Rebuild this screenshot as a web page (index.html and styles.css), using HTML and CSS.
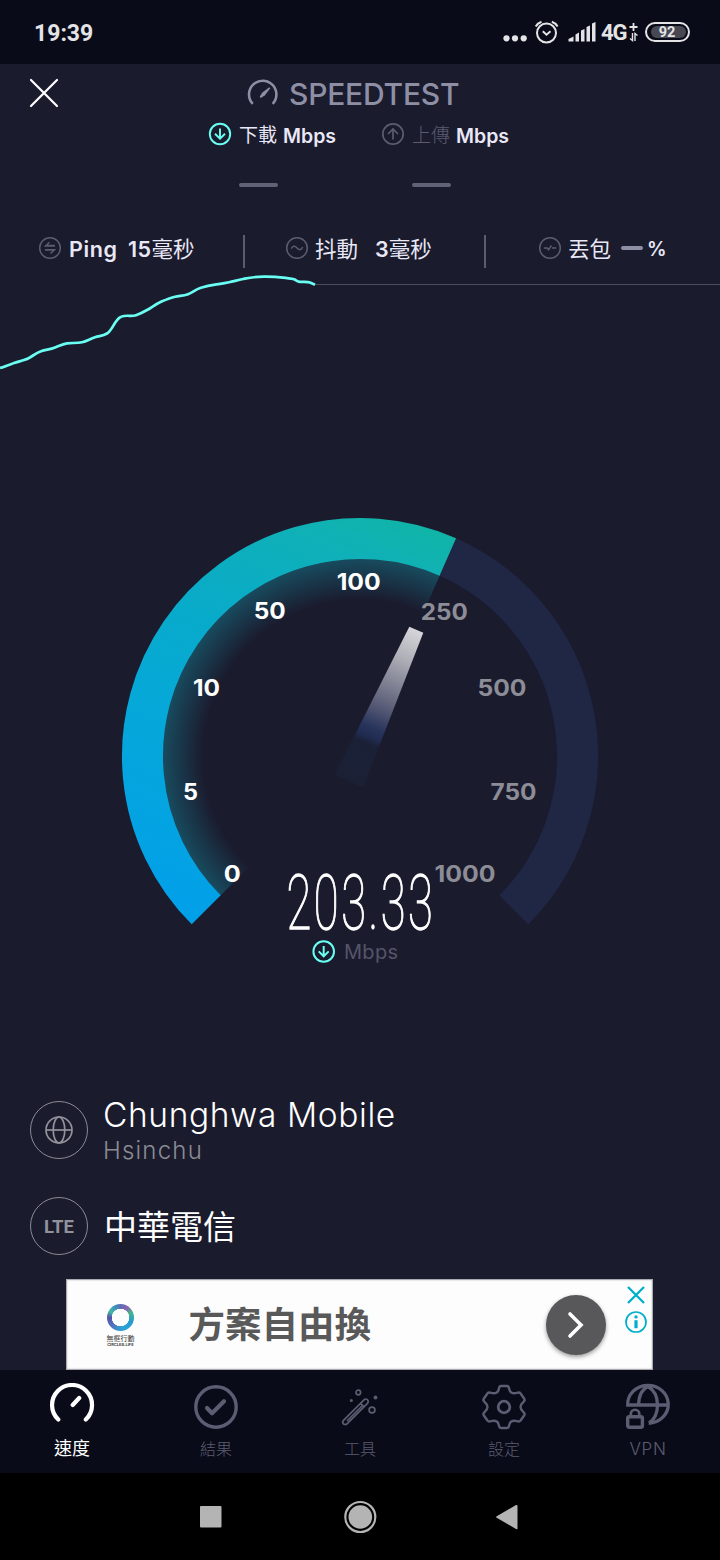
FILE: index.html
```html
<!DOCTYPE html>
<html lang="zh-Hant">
<head>
<meta charset="utf-8">
<title>Speedtest</title>
<link rel="stylesheet" href="styles.css">
</head>
<body>
<div class="phone">
  <header class="status">
    <span class="clock">19:39</span>
    <div class="status-icons">
      <svg width="100" height="28" viewBox="500 18 100 28" fill="none" stroke="#e4e4e6">
        <g fill="#e4e4e6" stroke="none"><circle cx="506.500" cy="38.300" r="3.100"/><circle cx="515" cy="38.300" r="3.100"/><circle cx="523.700" cy="38.300" r="3.100"/>
        <path d="M568.500 41.500V39l5-2.500v5zM575.500 41.500v-7l3.500-2v9zM581 41.500V30.500l3.500-1.500v12.500zM586.500 41.500V27l3.500-1.500v16zM592 41.500V23.500l3.500-1.500v19.500z"/></g>
        <circle cx="546.500" cy="33" r="9.500" stroke-width="2"/>
        <path d="M542.800 31.300l3.700 3.400 4-3.400M535.700 26.500q2-3.500 5.800-4.800M551.800 21.700q4 1.300 5.800 4.800" stroke-width="2"/>
      </svg>
      <span class="net">4G</span>
      <svg class="net-mark" width="10" height="22" viewBox="629 21 10 22" fill="none" stroke="#e4e4e6" stroke-width="1.400"><path d="M629.500 27h8M633.500 23v8" stroke-width="1.800"/><path d="M632.500 33v7.500l-2.500-2M635 41v-7.500l2.500 2"/></svg>
      <span class="battery"><span class="battery-level">92</span></span>
    </div>
  </header>

  <section class="top">
    <div class="title-row">
      <svg class="close" width="30" height="30" viewBox="0 0 30 30"><path d="M2 2l26 26M28 2L2 28" stroke="#fff" stroke-width="2.200" stroke-linecap="round"/></svg>
      <svg class="logo" width="32" height="28" viewBox="246 78 32 28" fill="none" stroke="#8e8fa5"><path d="M252.700 102.800a13.700 13.700 0 1 1 20 0" stroke-width="2.600"/><path d="M259.700 95.800l2.400-4 7.200-5.600 1 1-5.600 7.200-4 2.600z" fill="#8e8fa5" stroke="none"/></svg>
      <span class="brand">SPEEDTEST</span>
    </div>
    <div class="modes">
      <div class="mode">
        <svg width="24" height="24" viewBox="0 0 24 24" fill="none" stroke="#6afff3" stroke-width="1.900"><circle cx="12" cy="12" r="10.200"/><path d="M12 6.500V16.500M7 11.800l5 4.900 5-4.900"/></svg>
        <span class="mode-name">下載</span><span class="mbps">Mbps</span><i class="dash"></i>
      </div>
      <div class="mode mode-up">
        <svg width="24" height="24" viewBox="0 0 24 24" fill="none" stroke="#5c5c70" stroke-width="1.700"><circle cx="12" cy="12" r="10.200"/><path d="M12 17.500V7M7 12l5-5 5 5"/></svg>
        <span class="mode-name dim">上傳</span><span class="mbps">Mbps</span><i class="dash"></i>
      </div>
    </div>
    <div class="stats">
      <div class="stat ping">
        <svg width="24" height="24" viewBox="0 0 24 24" fill="none" stroke="#5c5c70" stroke-width="1.500"><circle cx="12" cy="12" r="10.300"/><path d="M17 10H7.500l4-3.700M7.500 9.600H17M7 13.700h9.500l-4 3.800M16.500 14H7"/></svg>
        <b class="ping-name">Ping</b><span class="value"><b>15</b>毫秒</span>
      </div>
      <div class="stat jitter">
        <svg width="24" height="24" viewBox="0 0 24 24" fill="none" stroke="#5c5c70" stroke-width="1.500"><circle cx="12" cy="12" r="10.300"/><path d="M6.300 12.700c1.600-3 3.600-3 5.700-.7s4 2.300 5.700-.8"/></svg>
        <span class="stat-name">抖動</span><span class="value"><b>3</b>毫秒</span>
      </div>
      <div class="stat loss">
        <svg width="24" height="24" viewBox="0 0 24 24" fill="none" stroke="#5c5c70" stroke-width="1.500"><circle cx="12" cy="12" r="10.300"/><path d="M5.800 12h3.400l1.400 1.800L13.400 9.500M14 12h4.300"/></svg>
        <span class="stat-name">丟包</span><i class="loss-dash"></i><b class="percent">%</b>
      </div>
    </div>
  </section>

  <svg class="history" width="720" height="110" viewBox="0 270 720 110" fill="none">
    <path d="M314 284.500H720" stroke="#4b4b5d"/>
    <path d="M0 368C5 366.500 10 364.500 14 363S24 360.500 28 358.500S36 353 41 351.300S50 349.500 55 347.500S63 344 67 343.300S77 343.500 82 342.300S90 338.800 95 337.300S103 336 107 333.500S113 325.500 116 321.500S120 316.800 124 316S132 316.600 136 315.200S144 311.800 148 309.500S156 304 161 301.800S170 297.800 175 296.700S183 296 188 294.200S195 289.500 201 287.800S210 285.500 215 284.700S224 283.400 229 282.300S238 280 243 279S253 276.700 264 276.600S277 276.800 283 277.700S291 278 294 279.300S297 281.400 300 281.800S308 281.600 310 282.600L315 284.800" stroke="#6afff3" stroke-width="2.700"/>
  </svg>

  <svg class="gauge" width="720" height="480" viewBox="0 500 720 480">
    <defs>
      <linearGradient id="arc" gradientUnits="userSpaceOnUse" x1="220" y1="925" x2="400" y2="515">
        <stop offset="0" stop-color="#02a0e9"/><stop offset=".38" stop-color="#05a8d8"/><stop offset=".65" stop-color="#09abc8"/><stop offset=".9" stop-color="#10b1b5"/><stop offset="1" stop-color="#10b4a7"/>
      </linearGradient>
      <radialGradient id="glow" gradientUnits="userSpaceOnUse" cx="360" cy="756" r="198">
        <stop offset=".79" stop-color="#157488" stop-opacity="0"/><stop offset=".88" stop-color="#157488" stop-opacity=".24"/><stop offset="1" stop-color="#157488" stop-opacity=".55"/>
      </radialGradient>
      <linearGradient id="needle" gradientUnits="userSpaceOnUse" x1="416" y1="630" x2="351" y2="781">
        <stop offset="0" stop-color="#d5d5d9"/><stop offset=".2" stop-color="#acacb5"/><stop offset=".5" stop-color="#5b5e78"/><stop offset=".65" stop-color="#28345b"/><stop offset=".71" stop-color="#202b50"/><stop offset=".75" stop-color="#1a2137"/><stop offset="1" stop-color="#1b2035"/>
      </linearGradient>
    </defs>
    <g fill="none">
      <path d="M447.800 557A217.500 217.500 0 0 1 513.800 909.800" stroke="#1f2744" stroke-width="41"/>
      <path d="M234.100 881.900A178 178 0 0 1 431.900 593.200" stroke="url(#glow)" stroke-width="42"/>
      <path d="M206.200 909.800A217.500 217.500 0 0 1 447.800 557" stroke="url(#arc)" stroke-width="41"/>
    </g>
    <path d="M409.300 626.700L423.300 632.800L363 787.500L335 774.500z" fill="url(#needle)"/>
    <g class="ticks" text-anchor="middle">
      <text x="232.300" y="882" textLength="17" lengthAdjust="spacingAndGlyphs">0</text><text x="190.500" y="799.500" textLength="15" lengthAdjust="spacingAndGlyphs">5</text><text x="206.500" y="695.500" textLength="27" lengthAdjust="spacingAndGlyphs">10</text><text x="269.700" y="619" textLength="32" lengthAdjust="spacingAndGlyphs">50</text><text x="358.700" y="590" textLength="44" lengthAdjust="spacingAndGlyphs">100</text>
      <g class="ahead"><text x="444.300" y="620" textLength="47" lengthAdjust="spacingAndGlyphs">250</text><text x="502" y="695.500" textLength="49" lengthAdjust="spacingAndGlyphs">500</text><text x="513.500" y="799.500" textLength="46" lengthAdjust="spacingAndGlyphs">750</text><text x="465" y="882" textLength="61" lengthAdjust="spacingAndGlyphs">1000</text></g>
    </g>
    <text class="speed" transform="translate(286.500 929) scale(.6 1)" textLength="244">203.33</text>
    <g fill="none" stroke="#6afff3" stroke-width="2"><circle cx="323.700" cy="951.500" r="10.300"/><path d="M323.700 946v10.200M318.700 951.400l5 4.900 5-4.900"/></g>
    <text class="speed-unit" x="344" y="959" textLength="54">Mbps</text>
  </svg>

  <section class="hosts">
    <div class="host">
      <div class="badge"><svg width="30" height="30" viewBox="0 0 30 30" fill="none" stroke="#92929b" stroke-width="1.700"><circle cx="15" cy="15" r="13"/><ellipse cx="15" cy="15" rx="5.800" ry="13"/><path d="M2 15h26"/></svg></div>
      <div class="host-text"><span class="host-name">Chunghwa Mobile</span><span class="host-city">Hsinchu</span></div>
    </div>
    <div class="host">
      <div class="badge lte">LTE</div>
      <span class="carrier">中華電信</span>
    </div>
  </section>

  <aside class="ad">
    <div class="ad-logo">
      <div class="ring"></div>
      <span class="ad-brand">無框行動</span><span class="ad-sub">CIRCLES.LIFE</span>
    </div>
    <span class="ad-title">方案自由換</span>
    <div class="ad-go"><svg width="20" height="30" viewBox="0 0 20 30" fill="none" stroke="#fff" stroke-width="3.600" stroke-linecap="round"><path d="M4 4l11 11L4 26"/></svg></div>
    <div class="ad-tools">
      <svg width="20" height="20" viewBox="0 0 20 20"><path d="M2 2l16 16M18 2L2 18" stroke="#00aecd" stroke-width="2.300"/></svg>
      <svg width="24" height="24" viewBox="0 0 24 24"><circle cx="12" cy="12" r="10" fill="none" stroke="#00aecd" stroke-width="1.700"/><circle cx="12" cy="6.900" r="1.700" fill="#00aecd"/><path d="M12 10.200v8" stroke="#00aecd" stroke-width="3.200"/></svg>
    </div>
  </aside>

  <nav class="tabs">
    <div class="tab active"><svg width="48" height="48" viewBox="0 0 48 48" fill="none" stroke="#fff" stroke-width="4.200" stroke-linecap="round"><path d="M10.300 36.500a20 20 0 1 1 27.500 0M24.700 22l6.500-7"/></svg><span>速度</span></div>
    <div class="tab"><svg width="48" height="48" viewBox="0 0 48 48" fill="none" stroke="#5c5c72"><circle cx="24" cy="24" r="20.200" stroke-width="3.400"/><path d="M15 25l5 5.200 12-12" stroke-width="4.200" stroke-linecap="round" stroke-linejoin="round"/></svg><span>結果</span></div>
    <div class="tab"><svg width="48" height="48" viewBox="0 0 48 48" fill="none" stroke="#5c5c72" stroke-width="1.700"><path d="M7.500 37.300L28 16.800a2.400 2.400 0 0 1 3.500 3.500L11 40.800a2.400 2.400 0 0 1-3.500-3.500zM24.500 20.300l3.500 3.500M11 38L26 23"/><circle cx="22.300" cy="9.500" r="2.300"/><circle cx="36" cy="27" r="2.900"/><g fill="#5c5c72" stroke="none"><circle cx="15.300" cy="17.500" r="1.500"/><circle cx="39.500" cy="14.500" r="1.900"/></g></svg><span>工具</span></div>
    <div class="tab"><svg width="48" height="48" viewBox="0 0 48 48" fill="none" stroke="#5c5c72" stroke-width="2.400" stroke-linejoin="round"><path d="M21 3h6q1.500 0 1.800 1.500 .8 4 2.400 5 2.100 1.300 5.500.4 2.800-1 3.700.4l3.900 5.500q.9 1.500-.6 2.800-3.200 2.900-3.200 5.400t3.200 5.400q1.500 1.300.6 2.800l-3.900 5.500q-.9 1.400-3.700.4-3.400-.9-5.500.4-1.600 1-2.400 5-.3 1.500-1.800 1.500h-6q-1.500 0-1.800-1.500-.8-4-2.400-5-2.100-1.300-5.500-.4-2.800 1-3.700-.4l-3.900-5.500q-.9-1.500.6-2.800 3.200-2.900 3.200-5.400t-3.200-5.400q-1.500-1.300-.6-2.800l3.900-5.500q.9-1.400 3.700-.4 3.400.9 5.500-.4 1.600-1 2.400-5Q19.500 3 21 3z"/><circle cx="24" cy="24" r="5.800" stroke-width="2.800"/></svg><span>設定</span></div>
    <div class="tab"><svg width="48" height="48" viewBox="0 0 48 48" fill="none" stroke="#5c5c72" stroke-width="3.300"><path d="M3.700 22.500a20.300 19 0 1 1 21 17.800M2.200 22h43.200M14.600 22q.3-14.500 9.400-18.500 9.500 5.500 9.500 18.500 0 12.500-8.500 18"/><rect x="3.700" y="33.700" width="14.700" height="10.600" rx="1.500" stroke-width="3.400"/><path d="M6.800 33v-2a4.200 4.200 0 0 1 8.500 0v2" stroke-width="2.700"/></svg><span class="vpn">VPN</span></div>
  </nav>
  <footer class="sysnav">
    <svg width="720" height="87" viewBox="0 1473 720 87" fill="#b4b4b4"><rect x="200" y="1506" width="21.500" height="21.500" rx="1"/><circle cx="360.300" cy="1517" r="11.800"/><circle cx="360.300" cy="1517" r="15" fill="none" stroke="#b4b4b4" stroke-width="2.200"/><path d="M496.700 1516.200L516 1505q1.500-.5 1.500 1v22.500q0 1.200-1.500.5l-19.300-11.200q-1.200-.8 0-1.600z"/></svg>
  </footer>
</div>
</body>
</html>
```
FILE: styles.css
```css
* { box-sizing: border-box; }
body { margin: 0; background: #000; }
svg { display: block; flex: none; }
.phone {
  width: 720px; height: 1560px; display: flex; flex-direction: column;
  background: #1b1b2e; color: #e9e8f6; overflow: hidden;
  font-family: Inter, "Noto Sans CJK TC", sans-serif; white-space: nowrap;
}
.phone > * { flex: none; }

.status {
  height: 64px; padding: 0 30px 0 34px; background: #090b18; color: #e4e4e6;
  display: flex; align-items: center; justify-content: space-between;
}
.clock { font: 700 23px/28px Roboto, sans-serif; padding-top: 3px; }
.status-icons { display: flex; align-items: center; }
.net { font: 700 22px/28px Roboto, sans-serif; width: 28px; margin-left: 1px; letter-spacing: -1px; padding-top: 1px; }
.battery { width: 45px; height: 20px; margin-left: 6px; border: 2px solid #e4e4e6; border-radius: 10px; padding: 2px; display: flex; }
.battery-level { flex: 1; margin-left: 2px; border-radius: 6px; background: #474852; font: 700 14.500px/13px Roboto, sans-serif; text-align: center; padding-right: 3px; }

.top { height: 206px; }
.title-row { height: 58px; display: flex; align-items: center; padding-left: 29px; }
.logo { margin-left: 187px; }
.brand { margin-left: 11px; font-size: 30px; font-weight: 550; color: #8e8fa5; padding-top: 1px; letter-spacing: -.2px; }
.modes { display: flex; height: 113px; padding-left: 208px; }
.mode { display: grid; grid-template-columns: 32px 43px auto; grid-template-rows: 24px 10px; align-items: center; align-content: start; row-gap: 34px; width: 173px; }
.mode-name { font-size: 19px; font-weight: 400; line-height: 24px; color: #e9e8f6; padding-top: 4px; margin-left: -1px; }
.mode-name.dim { color: #5c5c70; font-weight: 300; }
.mbps { font-size: 19.500px; font-weight: 600; line-height: 26px; padding-top: 3px; }
.dash { grid-column: 1 / 4; width: 39px; height: 4px; margin-left: 30.500px; border-radius: 2px; background: #626277; }
.stats { display: flex; height: 33px; }
.stat { display: flex; align-items: center; height: 33px; font-size: 21.500px; line-height: 28px; }
.stat b { font-weight: 600; }
.ping { width: 245px; padding-left: 38px; border-right: 2px solid #5c5c70; }
.jitter { width: 241px; padding-left: 40px; border-right: 2px solid #5c5c70; }
.loss { padding-left: 52px; }
.stat > svg { margin-bottom: 8px; }
.ping-name, .stat-name, .value, .percent { margin-bottom: 6px; }
.ping-name { margin-left: 7px; width: 59px; letter-spacing: .6px; }
.ping .value b { letter-spacing: .4px; }
.stat-name { margin-left: 6px; width: 60px; }
.loss-dash { width: 22px; height: 4px; border-radius: 2px; background: #8e8fa5; margin: 0 4px 8px -7px; }
.percent { font-size: 19.500px; }

.gauge { margin-top: 120px; }
.ticks { font: 700 22.500px Inter, sans-serif; fill: #fff; }
.ahead { fill: #8d8d97; }
.speed { font: 100 75.500px Roboto, sans-serif; fill: #fff; stroke: #fff; stroke-width: 1.300px; }
.speed-unit { font: 400 20px Inter, sans-serif; fill: #55556a; }

.hosts { height: 178px; margin-top: 121px; padding-left: 30px; }
.host { display: flex; height: 58px; margin-bottom: 38px; align-items: center; }
.badge { width: 58px; height: 58px; flex: none; border: 1.500px solid #8b8b95; border-radius: 50%; display: flex; align-items: center; justify-content: center; }
.lte { font: 700 18.500px Roboto, sans-serif; color: #92929b; padding-top: 2px; }
.host-text { display: flex; flex-direction: column; margin-left: 15px; }
.host-name { font-size: 33.500px; line-height: 40px; font-weight: 300; letter-spacing: .6px; color: #fff; padding-top: 1px; }
.host-city { font-size: 24px; line-height: 30px; font-weight: 300; color: #8b8b92; letter-spacing: 1.200px; padding-top: 1px; }
.carrier { font-size: 33px; line-height: 44px; color: #fff; margin-left: 16px; padding-top: 2px; }

.ad { width: 587px; height: 91px; margin-left: 66.400px; background: #fdfdfd; border: 1px solid #aaaab2; display: flex; align-items: center; box-shadow: inset 0 0 2px #bbb; }
.ad-logo { width: 40px; margin-left: 33px; display: flex; flex-direction: column; align-items: center; padding-top: 2px; }
.ring { width: 27px; height: 27px; border-radius: 50%; background: radial-gradient(circle, #fdfdfd 0 8.500px, transparent 9px), conic-gradient(#5a6fb5, #8c62b3 35deg, #45b68b 65deg, #269ad0 110deg, #2ba5d5 170deg, #5276c1 220deg, #5653ac 270deg, #42bba0 300deg, #3e94bf 330deg, #5a6fb5); }
.ad-brand { font: 500 7px/8px "Noto Sans CJK TC", sans-serif; color: #555; margin-top: 3px; }
.ad-sub { font: 700 4px/5px Inter, sans-serif; color: #444; }
.ad-title { font: 700 36.500px/50px "Noto Sans CJK TC", sans-serif; color: #595959; margin-left: 48px; width: 358px; padding-bottom: 3px; }
.ad-go { width: 60px; height: 60px; flex: none; border-radius: 50%; background: #58585a; display: flex; align-items: center; justify-content: center; box-shadow: 0 2px 4px #999; }
.ad-tools { margin-left: 18px; height: 79px; display: flex; flex-direction: column; gap: 5px; align-items: center; }

.tabs { height: 103px; background: #090b18; display: grid; grid-template-columns: repeat(5, 1fr); }
.tab { display: flex; flex-direction: column; align-items: center; padding-top: 13px; font-size: 16px; font-weight: 300; color: #5c5c70; line-height: 24px; gap: 6px; }
.tab.active { color: #fff; font-size: 18px; font-weight: 400; }
.vpn { font-size: 17px; font-weight: 300; letter-spacing: .7px; }
.sysnav { height: 87px; background: #000; }
```
